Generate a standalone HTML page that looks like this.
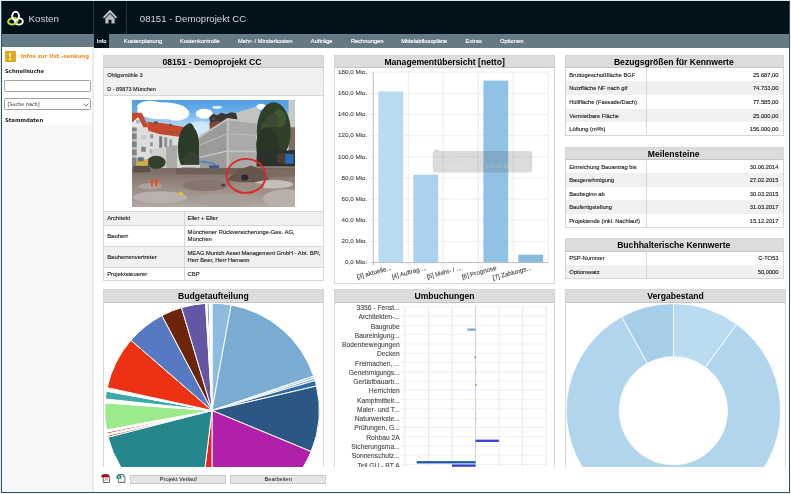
<!DOCTYPE html>
<html lang="de">
<head>
<meta charset="utf-8">
<title>08151 - Demoprojekt CC</title>
<style>
*{box-sizing:border-box;margin:0;padding:0}
html,body{width:791px;height:494px;overflow:hidden;background:#fff;font-family:"Liberation Sans",sans-serif;color:#222}
#page{will-change:transform;position:absolute;left:0;top:0;width:791px;height:494px;overflow:hidden;background:#fff}
.abs{position:absolute}
.nv{position:absolute;top:38.2px;font-size:5.75px;color:#fff;-webkit-text-stroke:0.15px #fff;white-space:nowrap;line-height:7px}
.sb{position:absolute;left:5px;font-family:"DejaVu Sans","Liberation Sans",sans-serif;font-weight:bold;font-size:5.3px;line-height:7px;color:#222;white-space:nowrap}
.panel{position:absolute;background:#fff;border:1px solid #d6d6d6;overflow:hidden}
.pt{position:absolute;left:0;top:0;right:0;height:12.4px;background:#dcdcdc;border-bottom:1px solid #c4c4c4;text-align:center;font-weight:bold;font-size:8.6px;line-height:12px;color:#000;white-space:nowrap}
.row{position:absolute;left:0;right:0;font-size:5.55px;color:#1a1a1a;-webkit-text-stroke:0.12px #1a1a1a;white-space:nowrap}
.row.g{background:#f0f0f0}
.row.t1{font-size:5.9px}
.row .l{position:absolute;left:3.0px;top:0}
.row .v{position:absolute;right:4.4px;top:0;text-align:right}
.cd{position:absolute;width:1px;background:#d6d6d6}
.hl{position:absolute;left:0;right:0;height:1px;background:#d6d6d6}
.btn{position:absolute;top:474.5px;height:9.8px;background:#e5e5e5;border:1px solid #c8c8c8;font-size:5.7px;line-height:7.9px;text-align:center;color:#111}
</style>
</head>
<body>
<div id="page">

<div class="abs" style="left:1px;top:0;width:789px;height:34px;background:#03111a"></div>
<div class="abs" style="left:1px;top:34px;width:789px;height:13.9px;background:#657a85"></div>
<div class="abs" style="left:93.2px;top:0;width:1px;height:34px;background:#27353d"></div>
<div class="abs" style="left:125.6px;top:0;width:1px;height:34px;background:#27353d"></div>
<svg class="abs" style="left:0;top:0" width="30" height="34" viewBox="0 0 30 34">
  <ellipse cx="18.9" cy="21.5" rx="3.9" ry="3.1" fill="none" stroke="#fff" stroke-width="1.9"/>
  <ellipse cx="12.8" cy="21.2" rx="4.8" ry="3.1" fill="none" stroke="#c6e01f" stroke-width="2" transform="rotate(-14 12.8 21.2)"/>
  <ellipse cx="15.6" cy="16.1" rx="3.4" ry="4.3" fill="none" stroke="#fff" stroke-width="1.9"/>
</svg>
<div class="abs" style="left:28.5px;top:13px;font-size:9.8px;line-height:12px;color:#d4d8da">Kosten</div>
<svg class="abs" style="left:102.4px;top:10.4px;overflow:visible" width="16" height="15" viewBox="0 0 16 15">
  <path d="M8 -0.2 L15.1 7.3 L13.9 8.6 L8 2.7 L2.1 8.6 L0.9 7.3 Z" fill="#c3c8cb"/>
  <path d="M3.3 8.4 L8 3.8 L12.7 8.4 L12.7 13.6 L9.4 13.6 L9.4 9.8 L6.6 9.8 L6.6 13.6 L3.3 13.6 Z" fill="#b4babd"/>
</svg>
<div class="abs" style="left:139.8px;top:13.1px;font-size:9.65px;line-height:12px;color:#d4d8da;white-space:nowrap">08151 - Demoprojekt CC</div>
<div class="abs" style="left:94.2px;top:34px;width:15.2px;height:13.9px;background:#03111a"></div>
<div class="nv" style="left:96.8px">Info</div>
<div class="nv" style="left:123.8px">Kostenplanung</div>
<div class="nv" style="left:180px">Kostenkontrolle</div>
<div class="nv" style="left:238px">Mehr- / Minderkosten</div>
<div class="nv" style="left:310.8px">Aufträge</div>
<div class="nv" style="left:350.9px">Rechnungen</div>
<div class="nv" style="left:401.3px">Mittelabflusspläne</div>
<div class="nv" style="left:465.5px">Extras</div>
<div class="nv" style="left:500px">Optionen</div>

<div class="abs" style="left:2px;top:47.4px;width:92.2px;height:445px;background:#f5f7f8;border-right:2px solid #eaedef"></div>
<div class="abs" style="left:2px;top:47.4px;width:90.4px;height:78px;background:#fff"></div>
<div class="abs" style="left:4.6px;top:50.6px;width:11.1px;height:11.6px;background:#e2ab1d"></div>
<div class="abs" style="left:9.2px;top:52.6px;width:1.9px;height:4.8px;background:#fbeec0"></div>
<div class="abs" style="left:9.2px;top:58.4px;width:1.9px;height:1.8px;background:#fbeec0"></div>
<div class="sb" style="left:20.8px;top:52.8px;color:#f08a1c;font-size:5.35px">Infos zur Ust.-senkung</div>
<div class="sb" style="top:68.1px">Schnellsuche</div>
<div class="abs" style="left:4.4px;top:80.4px;width:86.4px;height:12.1px;background:#fff;border:1px solid #a2a2a2;border-radius:1.5px"></div>
<div class="abs" style="left:4.4px;top:98.1px;width:86.4px;height:12.1px;background:#fff;border:1px solid #a2a2a2;border-radius:1.5px;font-family:'DejaVu Sans',sans-serif;font-size:4.85px;line-height:11.4px;padding-left:2.2px;color:#222">[Suche nach]</div>
<svg class="abs" style="left:83px;top:102.6px" width="6" height="4" viewBox="0 0 6 4"><path d="M0.6 0.6 L3 3 L5.4 0.6" fill="none" stroke="#555" stroke-width="0.8"/></svg>
<div class="sb" style="top:116.7px">Stammdaten</div>

<div class="panel" id="p1" style="left:103.20px;top:54.90px;width:220.50px;height:226.10px"><div class="pt" style="padding-right:3px">08151 - Demoprojekt CC</div>
<div class="row g" style="top:12px;height:27.6px"></div>
<div class="row" style="top:13.3px;height:13.7px;line-height:13.7px"><span class="l">Ohligsmühle 3</span></div>
<div class="row" style="top:27.2px;height:13.7px;line-height:13.7px"><span class="l">D - 89873 München</span></div>
<div class="hl" style="top:39.6px"></div>
<svg class="abs" style="left:27.60px;top:43.80px" width="162.9" height="107.0" viewBox="131.8 99.7 162.9 107.0">
<defs>
<linearGradient id="sky" x1="0" y1="0" x2="0" y2="1"><stop offset="0" stop-color="#4a9ae2"/><stop offset="0.22" stop-color="#69adea"/><stop offset="0.42" stop-color="#a3cef2"/><stop offset="0.65" stop-color="#cfe6f7"/><stop offset="1" stop-color="#d8ebf8"/></linearGradient>
<linearGradient id="gnd" x1="0" y1="0" x2="0" y2="1"><stop offset="0" stop-color="#776860"/><stop offset="0.3" stop-color="#8f8178"/><stop offset="0.6" stop-color="#a0948c"/><stop offset="1" stop-color="#b5ada8"/></linearGradient>
<filter id="bl" x="-5%" y="-5%" width="110%" height="110%"><feGaussianBlur stdDeviation="0.55"/></filter>
<clipPath id="pc"><rect x="131.8" y="99.7" width="162.9" height="107.0"/></clipPath>
</defs>
<g clip-path="url(#pc)">
<rect x="131.8" y="99.7" width="162.9" height="107.0" fill="#8f8178"/>
<g filter="url(#bl)">
<rect x="130" y="98" width="167" height="58" fill="url(#sky)"/>
<ellipse cx="162" cy="110.5" rx="25" ry="8.5" fill="#fff"/>
<ellipse cx="150" cy="106.5" rx="13" ry="6" fill="#fff"/>
<ellipse cx="176" cy="113" rx="13" ry="7.5" fill="#fdfdfd"/>
<ellipse cx="204" cy="113.5" rx="8.5" ry="5" fill="#fff"/>
<ellipse cx="217" cy="107" rx="5" ry="1.6" fill="#d6eafa"/>
<ellipse cx="261" cy="106.5" rx="5" ry="3" fill="#fff"/>
<ellipse cx="200" cy="127" rx="14" ry="6" fill="#d8ecfa" fill-opacity="0.8"/>
<!-- left building -->
<polygon points="130,124 150,126 181,135 181,170 130,170" fill="#dddddb"/>
<rect x="130" y="127" width="6.5" height="43" fill="#7c8288"/>
<rect x="132" y="131" width="5" height="2.2" fill="#c8c8c8"/><rect x="132" y="139" width="5" height="2.2" fill="#c8c8c8"/><rect x="132" y="147" width="5" height="2.2" fill="#c8c8c8"/><rect x="132" y="155" width="5" height="2.2" fill="#c8c8c8"/>
<polygon points="147,121.5 163,123 188,127.5 183,137 160,134 148,130.5" fill="#c6492d"/>
<polygon points="130,112.5 141.5,112.5 148.5,127 143,127 138,117 130,124" fill="#c6492d"/>
<polygon points="130,124 138,117 143,127 130,127" fill="#e6e6e6"/>
<rect x="136" y="119.5" width="4" height="3.5" fill="#a8b4c0"/>
<rect x="154" y="121" width="3.5" height="2.5" fill="#6a5048"/><rect x="169" y="123.5" width="2.5" height="2.5" fill="#6a5048"/>
<rect x="150" y="134" width="3" height="4" fill="#8a9098"/><rect x="150" y="142" width="2.5" height="4" fill="#8a9098"/><rect x="150" y="149" width="2.5" height="4" fill="#8a9098"/>
<rect x="141" y="146.5" width="4.5" height="5" fill="#7c848c"/><rect x="141" y="135" width="4.5" height="4" fill="#c4c8cc"/>
<rect x="159" y="136" width="3" height="14" fill="#707880"/><rect x="164" y="137" width="3" height="12" fill="#8c9298"/><rect x="169" y="139" width="3" height="8" fill="#989ea4"/>
<rect x="166" y="130.5" width="12" height="3" fill="#a85038"/>
<!-- dark roofs behind center -->
<polygon points="209,117 213,113.5 217,115 221,112.5 226,114 231,112 236,113 238,121 212,132" fill="#3e342f"/>
<polygon points="209,123 218,120 222,125 210,131" fill="#7c4a38"/>
<rect x="212" y="117" width="3" height="3" fill="#3c4a70"/>
<!-- left tree -->
<ellipse cx="188.5" cy="148" rx="10.8" ry="24" fill="#2c3a28"/>
<ellipse cx="189.5" cy="128" rx="4" ry="5" fill="#2c3a28"/>
<ellipse cx="192" cy="160" rx="9" ry="8" fill="#344030"/>
<!-- small building -->
<polygon points="151,149 166,146.5 166,169 151,169" fill="#cfcfcb"/>
<polygon points="166,146.5 177,144.8 177,169 166,169" fill="#a9a9a7"/>
<!-- central building -->
<polygon points="236,112.5 256,106.5 259.5,110.5 259.5,124 238,121" fill="#c4c4c0"/>
<polygon points="199,136 227,118 227,169 199,169" fill="#9b9b99"/>
<polygon points="227,118 256.3,121.5 256.3,169 227,169" fill="#a9a9a7"/>
<rect x="226.3" y="118" width="2.6" height="51" fill="#bdbdbb"/>
<polygon points="199,136 227,118 256.3,121.5 256.3,123.3 227,120 199,138" fill="#c2c2c0"/>
<polygon points="199,156.5 227,150 256.3,150.6 256.3,152 227,151.5 199,158" fill="#c6c6c4"/>
<polygon points="199,144.5 227,133 256.3,134.5 256.3,135.5 227,134.2 199,145.7" fill="#b8b8b6"/>
<!-- right tree and buildings -->
<rect x="288.3" y="98" width="8" height="29" fill="#c9c9c9"/>
<rect x="288.3" y="127" width="8" height="40" fill="#7c6c64"/>
<ellipse cx="273.5" cy="131" rx="17" ry="29" fill="#2f3f28"/>
<ellipse cx="279" cy="118" rx="7" ry="9" fill="#41562f"/>
<ellipse cx="266" cy="128" rx="5" ry="7" fill="#3c4e2d"/>
<ellipse cx="267" cy="145" rx="11" ry="18" fill="#2a3626"/>
<rect x="256.5" y="150" width="40" height="16" fill="#2b3029"/>
<rect x="277" y="153" width="8" height="10" fill="#4a3c34"/>
<rect x="285" y="153.5" width="8.5" height="10" fill="#2c6ab2"/>
<ellipse cx="272" cy="120" rx="6" ry="7" fill="#3a4a30"/>
<!-- ground -->
<rect x="130" y="167.8" width="167" height="42" fill="url(#gnd)"/>
<rect x="176.8" y="164.6" width="23" height="2.8" fill="#d2d2d0"/>
<rect x="176" y="168" width="121" height="6" fill="#6a5c54" fill-opacity="0.8"/>
<ellipse cx="156" cy="162" rx="9.5" ry="6.5" fill="#33422c"/>
<rect x="136" y="159" width="12" height="6.5" fill="#cfae44"/><rect x="137.5" y="157" width="6" height="4" fill="#5a7088"/>
<rect x="133" y="165.5" width="17" height="6.5" fill="#5a5048"/>
<path d="M200.4 161 L213 163.2 L218.5 167" fill="none" stroke="#4c7cc8" stroke-width="1.4"/>
<rect x="209" y="165" width="10" height="3" fill="#3c5c8c"/>
<polygon points="226,180 238,169.5 251,165.2 262,169.5 269,179 250,183" fill="#65554c"/>
<polygon points="265,169 294,168 296,176 268,177" fill="#7c6c60"/>
<ellipse cx="273" cy="184" rx="20" ry="4.2" fill="#c6beb8"/>
<ellipse cx="248" cy="186" rx="16" ry="4" fill="#9c8e84"/>
<ellipse cx="160" cy="197" rx="27" ry="6" fill="#b9b1ad"/>
<ellipse cx="150" cy="186" rx="12" ry="3" fill="#ada39d"/>
<ellipse cx="205" cy="185" rx="22" ry="6" fill="#857770"/>
<ellipse cx="285" cy="198" rx="22" ry="9" fill="#b8b0aa"/>
<ellipse cx="225" cy="200" rx="30" ry="7" fill="#a89e98"/>
<rect x="150.7" y="179" width="1.9" height="7" fill="#e8501c"/><rect x="155" y="178" width="1.9" height="8" fill="#e8501c"/><rect x="158.4" y="181" width="2" height="4" fill="#e87850"/>
<ellipse cx="180.6" cy="193.4" rx="2.7" ry="1.7" fill="#e8c01c"/>
<ellipse cx="244.5" cy="177.2" rx="3.6" ry="2.9" fill="#242a3a"/>
<ellipse cx="223" cy="185" rx="2" ry="1.5" fill="#5a3c28"/>
</g>
<ellipse cx="245.8" cy="175.6" rx="19.6" ry="17" fill="none" stroke="#e02828" stroke-width="1.9"/>
</g>
</svg>
<div class="hl" style="top:154.8px"></div>
<div class="row g t1" style="top:155.8px;height:13.3px;line-height:13.5px"><span class="l">Architekt</span><span class="l" style="left:83.4px">Eller + Eller</span></div>
<div class="hl" style="top:169.1px"></div>
<div class="row t1" style="top:170.1px;height:19.7px;line-height:20.6px"><span class="l">Bauherr</span><span class="l" style="left:83.4px;line-height:7.4px;top:3.1px">Münchener Rückversicherungs-Ges. AG,<br>München</span></div>
<div class="hl" style="top:189.8px"></div>
<div class="row g t1" style="top:190.8px;height:20.2px;line-height:20.6px"><span class="l">Bauherrenvertreter</span><span class="l" style="left:83.4px;line-height:7px;top:3.4px;font-size:5.72px">MEAG Munich Asset Management GmbH - Abt. BPI,<br>Herr Beer, Herr Hamann</span></div>
<div class="hl" style="top:211px"></div>
<div class="row t1" style="top:212px;height:13px;line-height:13.6px"><span class="l">Projektsteuerer</span><span class="l" style="left:83.4px">CBP</span></div>
<div class="cd" style="left:79.6px;top:155.8px;height:70px"></div>
</div>
<div class="panel" id="p2" style="left:334.30px;top:54.90px;width:220.60px;height:229.20px"><div class="pt" style="padding-right:0px">Managementübersicht [netto]</div><svg class="abs" style="left:0;top:0" width="218.60" height="227.20" viewBox="335.30 55.90 218.60 227.20" font-family="Liberation Sans, sans-serif">
<line x1="368.6" x2="548.4" y1="72.10" y2="72.10" stroke="#e8e8e8" stroke-width="0.7"/>
<text x="367.5" y="73.80" font-size="6.25" fill="#444" stroke="#444" stroke-width="0.1" text-anchor="end">180,0 Mio.</text>
<line x1="368.6" x2="548.4" y1="93.26" y2="93.26" stroke="#e8e8e8" stroke-width="0.7"/>
<text x="367.5" y="94.96" font-size="6.25" fill="#444" stroke="#444" stroke-width="0.1" text-anchor="end">160,0 Mio.</text>
<line x1="368.6" x2="548.4" y1="114.41" y2="114.41" stroke="#e8e8e8" stroke-width="0.7"/>
<text x="367.5" y="116.11" font-size="6.25" fill="#444" stroke="#444" stroke-width="0.1" text-anchor="end">140,0 Mio.</text>
<line x1="368.6" x2="548.4" y1="135.57" y2="135.57" stroke="#e8e8e8" stroke-width="0.7"/>
<text x="367.5" y="137.27" font-size="6.25" fill="#444" stroke="#444" stroke-width="0.1" text-anchor="end">120,0 Mio.</text>
<line x1="368.6" x2="548.4" y1="156.72" y2="156.72" stroke="#e8e8e8" stroke-width="0.7"/>
<text x="367.5" y="158.42" font-size="6.25" fill="#444" stroke="#444" stroke-width="0.1" text-anchor="end">100,0 Mio.</text>
<line x1="368.6" x2="548.4" y1="177.88" y2="177.88" stroke="#e8e8e8" stroke-width="0.7"/>
<text x="367.5" y="179.58" font-size="6.25" fill="#444" stroke="#444" stroke-width="0.1" text-anchor="end">80,0 Mio.</text>
<line x1="368.6" x2="548.4" y1="199.03" y2="199.03" stroke="#e8e8e8" stroke-width="0.7"/>
<text x="367.5" y="200.73" font-size="6.25" fill="#444" stroke="#444" stroke-width="0.1" text-anchor="end">60,0 Mio.</text>
<line x1="368.6" x2="548.4" y1="220.19" y2="220.19" stroke="#e8e8e8" stroke-width="0.7"/>
<text x="367.5" y="221.89" font-size="6.25" fill="#444" stroke="#444" stroke-width="0.1" text-anchor="end">40,0 Mio.</text>
<line x1="368.6" x2="548.4" y1="241.34" y2="241.34" stroke="#e8e8e8" stroke-width="0.7"/>
<text x="367.5" y="243.04" font-size="6.25" fill="#444" stroke="#444" stroke-width="0.1" text-anchor="end">20,0 Mio.</text>
<line x1="368.6" x2="548.4" y1="262.50" y2="262.50" stroke="#e8e8e8" stroke-width="0.7"/>
<text x="367.5" y="264.20" font-size="6.25" fill="#444" stroke="#444" stroke-width="0.1" text-anchor="end">0,0 Mio.</text>
<line x1="373.60" x2="373.60" y1="72.1" y2="265.5" stroke="#e4e4e4" stroke-width="0.7"/>
<line x1="408.60" x2="408.60" y1="72.1" y2="265.5" stroke="#e4e4e4" stroke-width="0.7"/>
<line x1="443.60" x2="443.60" y1="72.1" y2="265.5" stroke="#e4e4e4" stroke-width="0.7"/>
<line x1="478.60" x2="478.60" y1="72.1" y2="265.5" stroke="#e4e4e4" stroke-width="0.7"/>
<line x1="513.60" x2="513.60" y1="72.1" y2="265.5" stroke="#e4e4e4" stroke-width="0.7"/>
<line x1="548.60" x2="548.60" y1="72.1" y2="265.5" stroke="#e4e4e4" stroke-width="0.7"/>
<rect x="378.70" y="91.3" width="24.8" height="171.20" fill="#b9dbf1"/>
<rect x="413.70" y="174.6" width="24.8" height="87.90" fill="#aad1ed"/>
<rect x="448.70" y="261.9" width="24.8" height="0.60" fill="#9ccaea"/>
<rect x="483.70" y="80.5" width="24.8" height="182.00" fill="#90c2e6"/>
<rect x="518.70" y="254.6" width="24.8" height="7.90" fill="#86badf"/>
<line x1="373.6" x2="373.6" y1="72.1" y2="265.5" stroke="#b5b5b5" stroke-width="0.8"/>
<line x1="371.6" x2="548.4" y1="262.5" y2="262.5" stroke="#b5b5b5" stroke-width="0.8"/>
<text transform="translate(392.10,269.6) rotate(-15)" font-size="6.3" fill="#444" stroke="#444" stroke-width="0.1" text-anchor="end">[3] aktuelle...</text>
<text transform="translate(427.10,269.6) rotate(-15)" font-size="6.3" fill="#444" stroke="#444" stroke-width="0.1" text-anchor="end">[4] Auftrag ...</text>
<text transform="translate(462.10,269.6) rotate(-15)" font-size="6.3" fill="#444" stroke="#444" stroke-width="0.1" text-anchor="end">[5] Mehr- / ...</text>
<text transform="translate(497.10,269.6) rotate(-15)" font-size="6.3" fill="#444" stroke="#444" stroke-width="0.1" text-anchor="end">[6] Prognose</text>
<text transform="translate(532.10,269.6) rotate(-15)" font-size="6.3" fill="#444" stroke="#444" stroke-width="0.1" text-anchor="end">[7] Zahlungs...</text>
<path d="M434.4 151.1 L436.3 148.4 L440 151.1 Z" fill="#494949" fill-opacity="0.2"/>
<rect x="433" y="151" width="99.5" height="21.4" rx="2.5" fill="#494949" fill-opacity="0.2"/>
<text x="437" y="159.5" font-size="5.6" fill="#fff" fill-opacity="0.16">[6] Prognose</text>
<text x="437" y="167.5" font-size="5.6" fill="#fff" fill-opacity="0.24">● Prognose: <tspan x="485.6">171,63 M...</tspan></text>
</svg></div>
<div class="panel" id="p3" style="left:565.20px;top:54.90px;width:218.70px;height:81.00px"><div class="pt" style="padding-right:1.4px">Bezugsgrößen für Kennwerte</div><div class="row" style="font-size:5.76px;top:12.00px;height:13.55px;line-height:14.55px"><span class="l">Bruttogeschoßfläche BGF</span><span class="v">25.687,00</span></div>
<div class="row g" style="font-size:5.76px;top:25.55px;height:13.55px;line-height:14.55px"><span class="l">Nutzfläche NF nach gif</span><span class="v">74.733,00</span></div>
<div class="row" style="font-size:5.76px;top:39.10px;height:13.55px;line-height:14.55px"><span class="l">Hüllfläche (Fassade/Dach)</span><span class="v">77.585,00</span></div>
<div class="row g" style="font-size:5.76px;top:52.65px;height:13.55px;line-height:14.55px"><span class="l">Vermietbare Fläche</span><span class="v">25.000,00</span></div>
<div class="row" style="font-size:5.76px;top:66.20px;height:13.55px;line-height:14.55px"><span class="l">Lüftung (m³/h)</span><span class="v">156.000,00</span></div><div class="cd" style="left:80.3px;top:12px;height:70px"></div></div>
<div class="panel" id="p4" style="left:565.20px;top:146.50px;width:218.70px;height:81.60px"><div class="pt" style="padding-right:1.8px">Meilensteine</div><div class="row" style="font-size:5.76px;top:12.00px;height:13.55px;line-height:14.55px"><span class="l">Einreichung Bauantrag bis</span><span class="v">30.06.2014</span></div>
<div class="row g" style="font-size:5.76px;top:25.55px;height:13.55px;line-height:14.55px"><span class="l">Baugenehmigung</span><span class="v">27.02.2015</span></div>
<div class="row" style="font-size:5.76px;top:39.10px;height:13.55px;line-height:14.55px"><span class="l">Baubeginn ab</span><span class="v">30.03.2015</span></div>
<div class="row g" style="font-size:5.76px;top:52.65px;height:13.55px;line-height:14.55px"><span class="l">Baufertigstellung</span><span class="v">31.03.2017</span></div>
<div class="row" style="font-size:5.76px;top:66.20px;height:13.55px;line-height:14.55px"><span class="l">Projektende (inkl. Nachlauf)</span><span class="v">15.12.2017</span></div><div class="cd" style="left:80.3px;top:12px;height:70px"></div></div>
<div class="panel" id="p5" style="left:565.20px;top:238.20px;width:218.70px;height:41.00px"><div class="pt" style="padding-right:1.6px">Buchhalterische Kennwerte</div><div class="row" style="font-size:5.76px;top:12.00px;height:13.55px;line-height:14.55px"><span class="l">PSP-Nummer</span><span class="v">C-TO53</span></div>
<div class="row g" style="font-size:5.76px;top:25.55px;height:13.55px;line-height:14.55px"><span class="l">Optionssatz</span><span class="v">50,0000</span></div><div class="cd" style="left:80.3px;top:12px;height:30px"></div></div>
<div class="panel" id="p6" style="left:103.20px;top:289.30px;width:220.50px;height:179.00px"><div class="pt" style="padding-right:0px;height:12.9px;line-height:12.5px">Budgetaufteilung</div><svg class="abs" style="left:0;top:0" width="218.50" height="177.00" viewBox="104.20 290.30 218.50 177.00" font-family="Liberation Sans, sans-serif">
<path d="M212.2 410.8 L212.20 303.50 A107.3 107.3 0 0 1 231.39 305.23 Z" fill="#8fbbe3" stroke="#fff" stroke-width="1.0" stroke-linejoin="round"/>
<path d="M212.2 410.8 L231.39 305.23 A107.3 107.3 0 0 1 313.84 376.40 Z" fill="#7aabd2" stroke="#fff" stroke-width="1.0" stroke-linejoin="round"/>
<path d="M212.2 410.8 L313.84 376.40 A107.3 107.3 0 0 1 314.59 378.71 Z" fill="#a8cbe8" stroke="#fff" stroke-width="1.0" stroke-linejoin="round"/>
<path d="M212.2 410.8 L314.59 378.71 A107.3 107.3 0 0 1 315.24 380.86 Z" fill="#6f9fd0" stroke="#fff" stroke-width="1.0" stroke-linejoin="round"/>
<path d="M212.2 410.8 L315.24 380.86 A107.3 107.3 0 0 1 316.67 386.30 Z" fill="#2f6aa3" stroke="#fff" stroke-width="1.0" stroke-linejoin="round"/>
<path d="M212.2 410.8 L316.67 386.30 A107.3 107.3 0 0 1 311.33 451.86 Z" fill="#2a5783" stroke="#fff" stroke-width="1.0" stroke-linejoin="round"/>
<path d="M212.2 410.8 L311.33 451.86 A107.3 107.3 0 0 1 212.20 518.10 Z" fill="#b020a8" stroke="#fff" stroke-width="1.0" stroke-linejoin="round"/>
<path d="M212.2 410.8 L212.20 518.10 A107.3 107.3 0 0 1 199.12 517.30 Z" fill="#ea212b" stroke="#fff" stroke-width="1.0" stroke-linejoin="round"/>
<path d="M212.2 410.8 L199.12 517.30 A107.3 107.3 0 0 1 108.27 437.48 Z" fill="#25868d" stroke="#fff" stroke-width="1.0" stroke-linejoin="round"/>
<path d="M212.2 410.8 L108.27 437.48 A107.3 107.3 0 0 1 107.82 435.67 Z" fill="#8a5a40" stroke="#fff" stroke-width="1.0" stroke-linejoin="round"/>
<path d="M212.2 410.8 L107.82 435.67 A107.3 107.3 0 0 1 107.48 434.21 Z" fill="#ffffff" stroke="#fff" stroke-width="1.0" stroke-linejoin="round"/>
<path d="M212.2 410.8 L107.48 434.21 A107.3 107.3 0 0 1 107.09 432.38 Z" fill="#e8392b" stroke="#fff" stroke-width="1.0" stroke-linejoin="round"/>
<path d="M212.2 410.8 L107.09 432.38 A107.3 107.3 0 0 1 106.66 430.17 Z" fill="#ffffff" stroke="#fff" stroke-width="1.0" stroke-linejoin="round"/>
<path d="M212.2 410.8 L106.66 430.17 A107.3 107.3 0 0 1 105.17 403.13 Z" fill="#9bea8c" stroke="#fff" stroke-width="1.0" stroke-linejoin="round"/>
<path d="M212.2 410.8 L105.17 403.13 A107.3 107.3 0 0 1 105.53 399.21 Z" fill="#ffffff" stroke="#fff" stroke-width="1.0" stroke-linejoin="round"/>
<path d="M212.2 410.8 L105.53 399.21 A107.3 107.3 0 0 1 106.66 391.43 Z" fill="#3fa9a9" stroke="#fff" stroke-width="1.0" stroke-linejoin="round"/>
<path d="M212.2 410.8 L106.66 391.43 A107.3 107.3 0 0 1 107.36 387.94 Z" fill="#ffffff" stroke="#fff" stroke-width="1.0" stroke-linejoin="round"/>
<path d="M212.2 410.8 L107.36 387.94 A107.3 107.3 0 0 1 131.10 340.55 Z" fill="#ec3212" stroke="#fff" stroke-width="1.0" stroke-linejoin="round"/>
<path d="M212.2 410.8 L131.10 340.55 A107.3 107.3 0 0 1 162.16 315.88 Z" fill="#5679c1" stroke="#fff" stroke-width="1.0" stroke-linejoin="round"/>
<path d="M212.2 410.8 L162.16 315.88 A107.3 107.3 0 0 1 181.73 307.92 Z" fill="#6c2509" stroke="#fff" stroke-width="1.0" stroke-linejoin="round"/>
<path d="M212.2 410.8 L181.73 307.92 A107.3 107.3 0 0 1 205.84 303.69 Z" fill="#6456a5" stroke="#fff" stroke-width="1.0" stroke-linejoin="round"/>
<path d="M212.2 410.8 L205.84 303.69 A107.3 107.3 0 0 1 207.52 303.60 Z" fill="#ffffff" stroke="#fff" stroke-width="1.0" stroke-linejoin="round"/>
<path d="M212.2 410.8 L207.52 303.60 A107.3 107.3 0 0 1 209.20 303.54 Z" fill="#1f5a32" stroke="#fff" stroke-width="1.0" stroke-linejoin="round"/>
<path d="M212.2 410.8 L209.20 303.54 A107.3 107.3 0 0 1 212.20 303.50 Z" fill="#ffffff" stroke="#fff" stroke-width="1.0" stroke-linejoin="round"/>
</svg></div>
<div class="panel" id="p7" style="left:334.30px;top:289.30px;width:220.50px;height:179.00px"><div class="pt" style="padding-right:0px;height:12.9px;line-height:12.5px">Umbuchungen</div><svg class="abs" style="left:0;top:0" width="218.50" height="177.00" viewBox="335.30 290.30 218.50 177.00" font-family="Liberation Sans, sans-serif">
<line x1="405.20" x2="405.20" y1="307.2" y2="470" stroke="#dedede" stroke-width="0.7"/>
<line x1="428.75" x2="428.75" y1="307.2" y2="470" stroke="#dedede" stroke-width="0.7"/>
<line x1="452.30" x2="452.30" y1="307.2" y2="470" stroke="#dedede" stroke-width="0.7"/>
<line x1="475.85" x2="475.85" y1="307.2" y2="470" stroke="#bcbcbc" stroke-width="0.7"/>
<line x1="499.40" x2="499.40" y1="307.2" y2="470" stroke="#dedede" stroke-width="0.7"/>
<line x1="522.95" x2="522.95" y1="307.2" y2="470" stroke="#dedede" stroke-width="0.7"/>
<line x1="546.50" x2="546.50" y1="307.2" y2="470" stroke="#dedede" stroke-width="0.7"/>
<line x1="402" x2="546.50" y1="307.20" y2="307.20" stroke="#e4e4e4" stroke-width="0.6"/>
<text x="400" y="310.30" font-size="6.7" fill="#444" stroke="#444" stroke-width="0.1" text-anchor="end">3356 - Fenst...</text>
<line x1="402" x2="546.50" y1="316.47" y2="316.47" stroke="#e4e4e4" stroke-width="0.6"/>
<text x="400" y="319.57" font-size="6.7" fill="#444" stroke="#444" stroke-width="0.1" text-anchor="end">Architekten-...</text>
<line x1="402" x2="546.50" y1="325.74" y2="325.74" stroke="#e4e4e4" stroke-width="0.6"/>
<text x="400" y="328.84" font-size="6.7" fill="#444" stroke="#444" stroke-width="0.1" text-anchor="end">Baugrube</text>
<line x1="402" x2="546.50" y1="335.01" y2="335.01" stroke="#e4e4e4" stroke-width="0.6"/>
<text x="400" y="338.11" font-size="6.7" fill="#444" stroke="#444" stroke-width="0.1" text-anchor="end">Baureinigung...</text>
<line x1="402" x2="546.50" y1="344.28" y2="344.28" stroke="#e4e4e4" stroke-width="0.6"/>
<text x="400" y="347.38" font-size="6.7" fill="#444" stroke="#444" stroke-width="0.1" text-anchor="end">Bodenbewegungen</text>
<line x1="402" x2="546.50" y1="353.55" y2="353.55" stroke="#e4e4e4" stroke-width="0.6"/>
<text x="400" y="356.65" font-size="6.7" fill="#444" stroke="#444" stroke-width="0.1" text-anchor="end">Decken</text>
<line x1="402" x2="546.50" y1="362.82" y2="362.82" stroke="#e4e4e4" stroke-width="0.6"/>
<text x="400" y="365.92" font-size="6.7" fill="#444" stroke="#444" stroke-width="0.1" text-anchor="end">Freimachen, ...</text>
<line x1="402" x2="546.50" y1="372.09" y2="372.09" stroke="#e4e4e4" stroke-width="0.6"/>
<text x="400" y="375.19" font-size="6.7" fill="#444" stroke="#444" stroke-width="0.1" text-anchor="end">Genehmigungs...</text>
<line x1="402" x2="546.50" y1="381.36" y2="381.36" stroke="#e4e4e4" stroke-width="0.6"/>
<text x="400" y="384.46" font-size="6.7" fill="#444" stroke="#444" stroke-width="0.1" text-anchor="end">Gerüstbauarb...</text>
<line x1="402" x2="546.50" y1="390.63" y2="390.63" stroke="#e4e4e4" stroke-width="0.6"/>
<text x="400" y="393.73" font-size="6.7" fill="#444" stroke="#444" stroke-width="0.1" text-anchor="end">Herrichten</text>
<line x1="402" x2="546.50" y1="399.90" y2="399.90" stroke="#e4e4e4" stroke-width="0.6"/>
<text x="400" y="403.00" font-size="6.7" fill="#444" stroke="#444" stroke-width="0.1" text-anchor="end">Kampfmittelr...</text>
<line x1="402" x2="546.50" y1="409.17" y2="409.17" stroke="#e4e4e4" stroke-width="0.6"/>
<text x="400" y="412.27" font-size="6.7" fill="#444" stroke="#444" stroke-width="0.1" text-anchor="end">Maler- und T...</text>
<line x1="402" x2="546.50" y1="418.44" y2="418.44" stroke="#e4e4e4" stroke-width="0.6"/>
<text x="400" y="421.54" font-size="6.7" fill="#444" stroke="#444" stroke-width="0.1" text-anchor="end">Naturwerkste...</text>
<line x1="402" x2="546.50" y1="427.71" y2="427.71" stroke="#e4e4e4" stroke-width="0.6"/>
<text x="400" y="430.81" font-size="6.7" fill="#444" stroke="#444" stroke-width="0.1" text-anchor="end">Prüfungen, G...</text>
<line x1="402" x2="546.50" y1="436.98" y2="436.98" stroke="#e4e4e4" stroke-width="0.6"/>
<text x="400" y="440.08" font-size="6.7" fill="#444" stroke="#444" stroke-width="0.1" text-anchor="end">Rohbau 2A</text>
<line x1="402" x2="546.50" y1="446.25" y2="446.25" stroke="#e4e4e4" stroke-width="0.6"/>
<text x="400" y="449.35" font-size="6.7" fill="#444" stroke="#444" stroke-width="0.1" text-anchor="end">Sicherungsma...</text>
<line x1="402" x2="546.50" y1="455.52" y2="455.52" stroke="#e4e4e4" stroke-width="0.6"/>
<text x="400" y="458.62" font-size="6.7" fill="#444" stroke="#444" stroke-width="0.1" text-anchor="end">Sonnenschutz...</text>
<line x1="402" x2="546.50" y1="464.79" y2="464.79" stroke="#e4e4e4" stroke-width="0.6"/>
<text x="400" y="467.89" font-size="6.7" fill="#444" stroke="#444" stroke-width="0.1" text-anchor="end">Teil GU - BT A</text>
<rect x="467.70" y="328.75" width="8.15" height="2.3" fill="#79a9d4"/>
<rect x="474.95" y="356.80" width="1.10" height="1.4" fill="#2a3f8f"/>
<rect x="475.65" y="372.30" width="0.70" height="1.4" fill="#8a6fb0"/>
<rect x="475.85" y="384.45" width="1.40" height="1.5" fill="#8a9a20"/>
<rect x="475.85" y="403.30" width="0.70" height="1.4" fill="#9be8b0"/>
<rect x="475.85" y="412.30" width="0.70" height="1.4" fill="#7fd8e8"/>
<rect x="475.55" y="418.80" width="0.80" height="1.4" fill="#c090c8"/>
<rect x="475.85" y="439.95" width="23.35" height="2.3" fill="#3b40dc"/>
<rect x="475.35" y="446.40" width="0.50" height="1.2" fill="#9a90d0"/>
<rect x="417.00" y="461.45" width="58.85" height="2.3" fill="#1c57ab"/>
<rect x="452.30" y="464.75" width="23.55" height="2.3" fill="#2c40cc"/>
</svg></div>
<div class="panel" id="p8" style="left:565.20px;top:289.30px;width:220.60px;height:179.00px"><div class="pt" style="padding-right:0px;height:12.9px;line-height:12.5px">Vergabestand</div><svg class="abs" style="left:0;top:0" width="218.60" height="177.00" viewBox="566.20 290.30 218.60 177.00" font-family="Liberation Sans, sans-serif">
<path d="M673.60 303.80 A107.2 107.2 0 0 1 737.06 324.60 L705.57 367.48 A54 54 0 0 0 673.60 357.00 Z" fill="#badcf1" stroke="#fff" stroke-width="0.9"/>
<path d="M737.06 324.60 A107.2 107.2 0 1 1 621.96 317.06 L647.59 363.68 A54 54 0 1 0 705.57 367.48 Z" fill="#b1d5ed" stroke="#fff" stroke-width="0.9"/>
<path d="M621.96 317.06 A107.2 107.2 0 0 1 673.60 303.80 L673.60 357.00 A54 54 0 0 0 647.59 363.68 Z" fill="#a6cee9" stroke="#fff" stroke-width="0.9"/>
</svg></div>

<div class="abs" style="left:94.4px;top:466.7px;width:695px;height:26px;background:#fff"></div>
<div class="btn" style="left:130.4px;width:95.8px">Projekt Verlauf</div>
<div class="btn" style="left:230px;width:96.4px">Bearbeiten</div>
<svg class="abs" style="left:100px;top:472px" width="28" height="13" viewBox="100 472 28 13">
<path d="M103.3 474.5 L107.8 474.5 L109.6 476.3 L109.6 482.5 L103.3 482.5 Z" fill="#fff" stroke="#3a3232" stroke-width="0.7"/>
<path d="M107.8 474.5 L107.8 476.3 L109.6 476.3" fill="none" stroke="#3a3232" stroke-width="0.5"/>
<rect x="101.5" y="474.6" width="7.4" height="2.8" fill="#a81020"/>
<path d="M104.6 481.6 L106.3 478.2 L108.4 481" fill="none" stroke="#c03040" stroke-width="0.6"/>
<path d="M118.4 474.5 L123 474.5 L124.9 476.3 L124.9 482.5 L118.4 482.5 Z" fill="#fff" stroke="#3a3232" stroke-width="0.7"/>
<path d="M123 474.5 L123 476.3 L124.9 476.3" fill="none" stroke="#3a3232" stroke-width="0.5"/>
<rect x="116.5" y="475.2" width="4.8" height="3.5" fill="#128272"/>
<path d="M117.6 476 L120.2 478 M120.2 476 L117.6 478" stroke="#d8f0ec" stroke-width="0.6"/>
<path d="M119.8 480 H123.8 M119.8 481.3 H123.8" stroke="#c4c4c4" stroke-width="0.4"/>
</svg>



<div class="abs" style="left:0;top:0;width:1.1px;height:494px;background:#dff0f6"></div>
<div class="abs" style="left:1.1px;top:0;width:1.1px;height:493px;background:#33505b"></div>
<div class="abs" style="left:788.7px;top:0;width:1.3px;height:493px;background:#33505b"></div>
<div class="abs" style="left:1.1px;top:491.5px;width:788.9px;height:1.4px;background:#33505b"></div>
<div class="abs" style="left:0;top:492.9px;width:791px;height:1.1px;background:#eef7fa"></div>
<div class="abs" style="left:790px;top:0;width:1px;height:494px;background:#eef7fa"></div>
<div class="abs" style="left:0;top:0;width:791px;height:0.8px;background:#dbe9ee"></div>

</div>
</body>
</html>
